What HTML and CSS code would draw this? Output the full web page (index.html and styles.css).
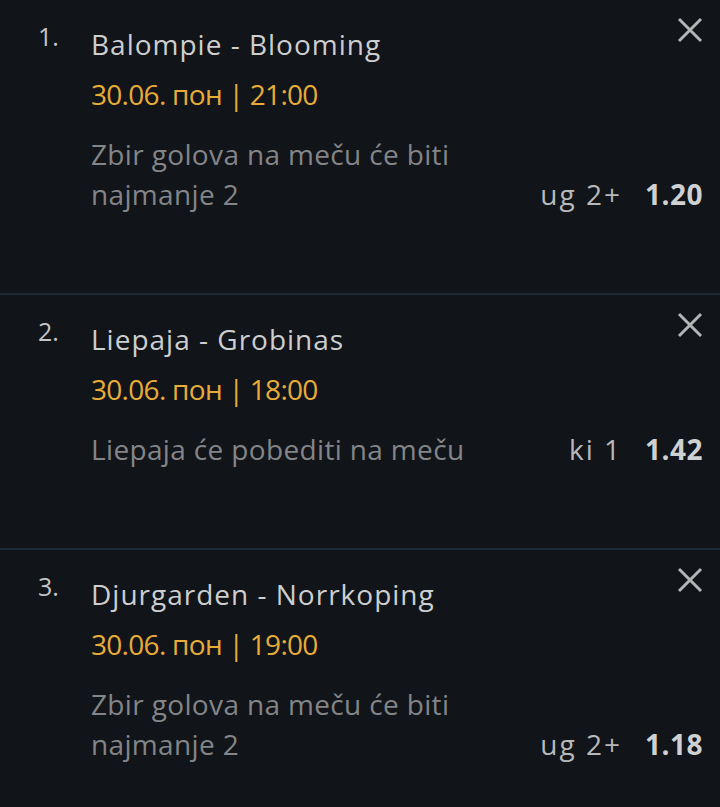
FILE: index.html
```html
<!DOCTYPE html>
<html lang="sr">
<head>
    <meta charset="UTF-8">
    <meta name="viewport" content="width=device-width, initial-scale=1.0">
    <title>Tiket</title>
    <link rel="stylesheet" href="styles.css">
</head>
<body>
    <ul class="slip">
        <li class="bet">
            <span class="num">1.</span>
            <div class="match">Balompie - Blooming</div>
            <button class="remove" aria-label="Ukloni">
                <svg viewBox="0 0 26 26" width="26" height="26"><path d="M2 2 L24 24 M24 2 L2 24"/></svg>
            </button>
            <div class="time">30.06. пон | 21:00</div>
            <div class="pick">
                <p class="desc">Zbir golova na meču će biti najmanje 2</p>
                <span class="tip">ug 2+</span>
                <span class="odd">1.20</span>
            </div>
        </li>
        <li class="bet">
            <span class="num">2.</span>
            <div class="match">Liepaja - Grobinas</div>
            <button class="remove" aria-label="Ukloni">
                <svg viewBox="0 0 26 26" width="26" height="26"><path d="M2 2 L24 24 M24 2 L2 24"/></svg>
            </button>
            <div class="time">30.06. пон | 18:00</div>
            <div class="pick">
                <p class="desc">Liepaja će pobediti na meču</p>
                <span class="tip">ki 1</span>
                <span class="odd">1.42</span>
            </div>
        </li>
        <li class="bet">
            <span class="num">3.</span>
            <div class="match">Djurgarden - Norrkoping</div>
            <button class="remove" aria-label="Ukloni">
                <svg viewBox="0 0 26 26" width="26" height="26"><path d="M2 2 L24 24 M24 2 L2 24"/></svg>
            </button>
            <div class="time">30.06. пон | 19:00</div>
            <div class="pick">
                <p class="desc">Zbir golova na meču će biti najmanje 2</p>
                <span class="tip">ug 2+</span>
                <span class="odd">1.18</span>
            </div>
        </li>
    </ul>
</body>
</html>
```
FILE: styles.css
```css
body {
    margin: 0;
    background-color: #111418;
    font-family: "Open Sans", Lato, sans-serif;
    font-size: 28px;
    color: #cdcecf;
}
.slip {
    list-style-type: none;
    margin: 0;
    padding: 0;
}
.bet {
    display: grid;
    grid-template-columns: 53px 1fr auto;
    padding: 24px 17px 79px 38px;
    border-bottom: 2px solid #1c2833;
}
.num {
    font-size: 25px;
    color: #c4c5c6;
    line-height: 1.2;
    margin-top: -3px;
}
.match {
    line-height: 40px;
    letter-spacing: 1px;
}
.remove {
    align-self: start;
    margin: -7px 0 0 0;
    padding: 0;
    border: none;
    background: none;
    width: 26px;
    height: 26px;
}
.remove svg {
    display: block;
    stroke: #b4b5b6;
    stroke-width: 3;
    fill: none;
}
.time {
    grid-column: 2 / 4;
    margin-top: 10px;
    line-height: 40px;
    color: #e7ac38;
    letter-spacing: -0.7px;
}
.pick {
    grid-column: 2 / 4;
    margin-top: 20px;
    display: flex;
    align-items: flex-end;
    line-height: 40px;
}
.desc {
    flex: 1;
    margin: 0;
    color: #838588;
    letter-spacing: 0.35px;
}
.tip {
    margin-left: 20px;
    color: #b8b9ba;
    letter-spacing: 2px;
}
.odd {
    margin-left: 23px;
    font-weight: bold;
    color: #cfd0d1;
    letter-spacing: 0.5px;
}
```
